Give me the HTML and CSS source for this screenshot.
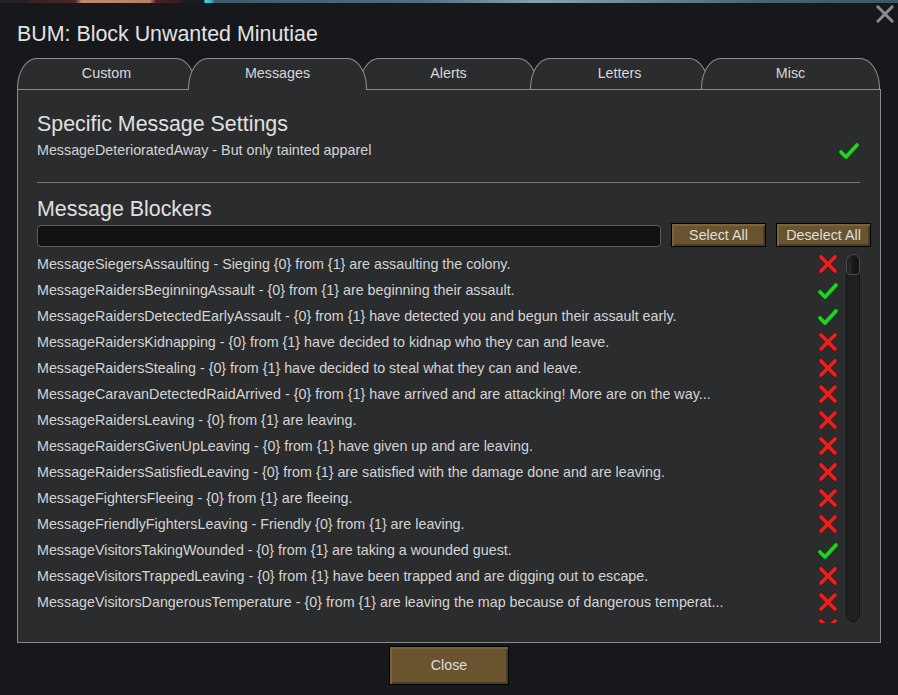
FILE: index.html
```html
<!DOCTYPE html>
<html>
<head>
<meta charset="utf-8">
<link rel="stylesheet" href="styles.css">
</head>
<body>
<div class="strip"></div>
<div class="header">
  <div class="title">BUM: Block Unwanted Minutiae</div>
  <svg class="winclose" width="18" height="18" viewBox="0 0 18 18"><path d="M2 2 L16 16 M16 2 L2 16" stroke="#8a8b8d" stroke-width="3" stroke-linecap="square"/></svg>
</div>
<div class="tabs">
  <div class="tab">Custom</div>
  <div class="tab active">Messages</div>
  <div class="tab">Alerts</div>
  <div class="tab">Letters</div>
  <div class="tab">Misc</div>
</div>
<div class="panel">
  <div class="heading">Specific Message Settings</div>
  <div class="row setting">
    <span class="label">MessageDeterioratedAway - But only tainted apparel</span>
    <svg class="icon" viewBox="0 0 22 22"><polyline class="glow-g" points="3,13 8,18 19,6"/><polyline class="ok" points="3,13 8,18 19,6"/></svg>
  </div>
  <div class="sep"></div>
  <div class="heading h2">Message Blockers</div>
  <div class="toolbar">
    <div class="search"></div>
    <div class="btn small">Select All</div>
    <div class="btn small">Deselect All</div>
  </div>
  <div class="list">
    <div class="rows">
      <div class="row"><span class="label">MessageSiegersAssaulting - Sieging {0} from {1} are assaulting the colony.</span><svg class="icon" viewBox="0 0 22 22"><path class="glow-r" d="M4 4 L18 18 M18 4 L4 18"/><path class="no" d="M4 4 L18 18 M18 4 L4 18"/></svg></div>
      <div class="row"><span class="label">MessageRaidersBeginningAssault - {0} from {1} are beginning their assault.</span><svg class="icon" viewBox="0 0 22 22"><polyline class="glow-g" points="3,13 8,18 19,6"/><polyline class="ok" points="3,13 8,18 19,6"/></svg></div>
      <div class="row"><span class="label">MessageRaidersDetectedEarlyAssault - {0} from {1} have detected you and begun their assault early.</span><svg class="icon" viewBox="0 0 22 22"><polyline class="glow-g" points="3,13 8,18 19,6"/><polyline class="ok" points="3,13 8,18 19,6"/></svg></div>
      <div class="row"><span class="label">MessageRaidersKidnapping - {0} from {1} have decided to kidnap who they can and leave.</span><svg class="icon" viewBox="0 0 22 22"><path class="glow-r" d="M4 4 L18 18 M18 4 L4 18"/><path class="no" d="M4 4 L18 18 M18 4 L4 18"/></svg></div>
      <div class="row"><span class="label">MessageRaidersStealing - {0} from {1} have decided to steal what they can and leave.</span><svg class="icon" viewBox="0 0 22 22"><path class="glow-r" d="M4 4 L18 18 M18 4 L4 18"/><path class="no" d="M4 4 L18 18 M18 4 L4 18"/></svg></div>
      <div class="row"><span class="label">MessageCaravanDetectedRaidArrived - {0} from {1} have arrived and are attacking! More are on the way...</span><svg class="icon" viewBox="0 0 22 22"><path class="glow-r" d="M4 4 L18 18 M18 4 L4 18"/><path class="no" d="M4 4 L18 18 M18 4 L4 18"/></svg></div>
      <div class="row"><span class="label">MessageRaidersLeaving - {0} from {1} are leaving.</span><svg class="icon" viewBox="0 0 22 22"><path class="glow-r" d="M4 4 L18 18 M18 4 L4 18"/><path class="no" d="M4 4 L18 18 M18 4 L4 18"/></svg></div>
      <div class="row"><span class="label">MessageRaidersGivenUpLeaving - {0} from {1} have given up and are leaving.</span><svg class="icon" viewBox="0 0 22 22"><path class="glow-r" d="M4 4 L18 18 M18 4 L4 18"/><path class="no" d="M4 4 L18 18 M18 4 L4 18"/></svg></div>
      <div class="row"><span class="label">MessageRaidersSatisfiedLeaving - {0} from {1} are satisfied with the damage done and are leaving.</span><svg class="icon" viewBox="0 0 22 22"><path class="glow-r" d="M4 4 L18 18 M18 4 L4 18"/><path class="no" d="M4 4 L18 18 M18 4 L4 18"/></svg></div>
      <div class="row"><span class="label">MessageFightersFleeing - {0} from {1} are fleeing.</span><svg class="icon" viewBox="0 0 22 22"><path class="glow-r" d="M4 4 L18 18 M18 4 L4 18"/><path class="no" d="M4 4 L18 18 M18 4 L4 18"/></svg></div>
      <div class="row"><span class="label">MessageFriendlyFightersLeaving - Friendly {0} from {1} are leaving.</span><svg class="icon" viewBox="0 0 22 22"><path class="glow-r" d="M4 4 L18 18 M18 4 L4 18"/><path class="no" d="M4 4 L18 18 M18 4 L4 18"/></svg></div>
      <div class="row"><span class="label">MessageVisitorsTakingWounded - {0} from {1} are taking a wounded guest.</span><svg class="icon" viewBox="0 0 22 22"><polyline class="glow-g" points="3,13 8,18 19,6"/><polyline class="ok" points="3,13 8,18 19,6"/></svg></div>
      <div class="row"><span class="label">MessageVisitorsTrappedLeaving - {0} from {1} have been trapped and are digging out to escape.</span><svg class="icon" viewBox="0 0 22 22"><path class="glow-r" d="M4 4 L18 18 M18 4 L4 18"/><path class="no" d="M4 4 L18 18 M18 4 L4 18"/></svg></div>
      <div class="row"><span class="label">MessageVisitorsDangerousTemperature - {0} from {1} are leaving the map because of dangerous temperat...</span><svg class="icon" viewBox="0 0 22 22"><path class="glow-r" d="M4 4 L18 18 M18 4 L4 18"/><path class="no" d="M4 4 L18 18 M18 4 L4 18"/></svg></div>
      <div class="row"><span class="label"></span><svg class="icon" viewBox="0 0 22 22"><path class="glow-r" d="M4 4 L18 18 M18 4 L4 18"/><path class="no" d="M4 4 L18 18 M18 4 L4 18"/></svg></div>
    </div>
    <div class="scrolltrack"><div class="thumb"></div></div>
  </div>
</div>
<div class="footer">
  <div class="btn big">Close</div>
</div>
</body>
</html>
```
FILE: styles.css
```css
html, body {
  margin: 0;
  padding: 0;
}
body {
  width: 898px;
  height: 695px;
  overflow: hidden;
  background: #16181c;
  font-family: "Liberation Sans", Arial, sans-serif;
  color: #d4d4d4;
}
.strip {
  height: 3px;
  background: linear-gradient(to right, #222226 0px, #222226 28px, #3b2022 30px, #4a2624 75px, #c28a6c 82px, #b88068 150px, #4a2224 156px, #3a1c20 178px, #1c1c20 182px, #1c1c20 204px, #38d8e8 205px, #2fb8c8 211px, #40596a 215px, #4f6e7e 420px, #86a2ae 540px, #6c8896 640px, #4a6474 760px, #3e5666 898px);
}
.header {
  display: flex;
  justify-content: space-between;
  align-items: flex-start;
  padding: 0 4px 0 17px;
}
.title {
  margin-top: 19px;
  font-size: 21.4px;
  line-height: 24px;
  color: #e2e2e2;
}
.winclose {
  display: block;
  margin-top: 2px;
}
.tabs {
  display: flex;
  margin: 12px 0 0 17px;
  height: 31px;
}
.tab {
  position: relative;
  box-sizing: border-box;
  width: 179px;
  height: 31px;
  flex: none;
  margin-left: -8px;
  background: #2b2c2e;
  border: 1px solid #8e8e8e;
  border-bottom: none;
  border-radius: 20px 20px 0 0 / 30px 30px 0 0;
  text-align: center;
  font-size: 14.3px;
  line-height: 28px;
  color: #d8d8d8;
}
.tab:first-child {
  margin-left: 0;
}
.tab.active {
  z-index: 2;
  height: 32px;
}
.panel {
  position: relative;
  z-index: 1;
  box-sizing: border-box;
  width: 864px;
  height: 554px;
  margin-left: 17px;
  background: #2b2c2e;
  border: 1px solid #8a8a8a;
  padding: 22px 20px 0 19px;
}
.heading {
  font-size: 21.4px;
  line-height: 25px;
  color: #e0e0e0;
}
.row {
  display: flex;
  align-items: center;
  height: 26px;
  font-size: 14.3px;
  line-height: 26px;
}
.row .label {
  flex: 1;
  white-space: nowrap;
  overflow: hidden;
}
.row.setting {
  height: 22px;
  margin-top: 2px;
}
.icon {
  display: block;
  width: 22px;
  height: 22px;
  flex: none;
}
.ok {
  fill: none;
  stroke: #27d027;
  stroke-width: 3.6;
  stroke-linecap: round;
  stroke-linejoin: round;
}
.glow-g {
  fill: none;
  stroke: #0f4a12;
  stroke-width: 5.6;
  stroke-linecap: round;
  stroke-linejoin: round;
  opacity: 0.8;
}
.no {
  fill: none;
  stroke: #e3231f;
  stroke-width: 3.6;
  stroke-linecap: round;
}
.glow-r {
  fill: none;
  stroke: #5a1412;
  stroke-width: 5.6;
  stroke-linecap: round;
  opacity: 0.8;
}
.sep {
  height: 1px;
  margin-top: 21px;
  background: #767676;
}
.h2 {
  margin-top: 14px;
}
.toolbar {
  display: flex;
  align-items: flex-end;
  gap: 10px;
  height: 24px;
  margin: 1px -11px 0 0;
}
.search {
  flex: 1;
  box-sizing: border-box;
  height: 22px;
  background: #121212;
  border: 1px solid #5c5c5c;
  border-radius: 4px;
}
.btn {
  box-sizing: border-box;
  background: #6a5430;
  border: 1px solid #000;
  box-shadow: inset 2px 2px 0 #7b643c, inset -2px -2px 0 #4c3c20;
  color: #dedede;
  text-align: center;
  font-size: 14.3px;
}
.btn.small {
  width: 95px;
  height: 24px;
  line-height: 22px;
}
.list {
  display: flex;
  gap: 7px;
  height: 372px;
  margin-top: 4px;
  overflow: hidden;
}
.rows {
  flex: 1;
}
.scrolltrack {
  box-sizing: border-box;
  width: 14px;
  height: 368px;
  margin-top: 3px;
  flex: none;
  background: #1f201f;
  border: 1px solid #141414;
  border-radius: 7px;
}
.thumb {
  box-sizing: border-box;
  height: 21px;
  margin: -1px;
  background: linear-gradient(to right, #1a1a1a 0, #2c2c2c 3px, #1a1a1a 5px, #141414 100%);
  border: 1px solid #4e4e4e;
  border-radius: 7px 7px 4px 4px;
}
.footer {
  display: flex;
  justify-content: center;
  margin-top: 3px;
}
.btn.big {
  width: 120px;
  height: 39px;
  line-height: 37px;
}
```
